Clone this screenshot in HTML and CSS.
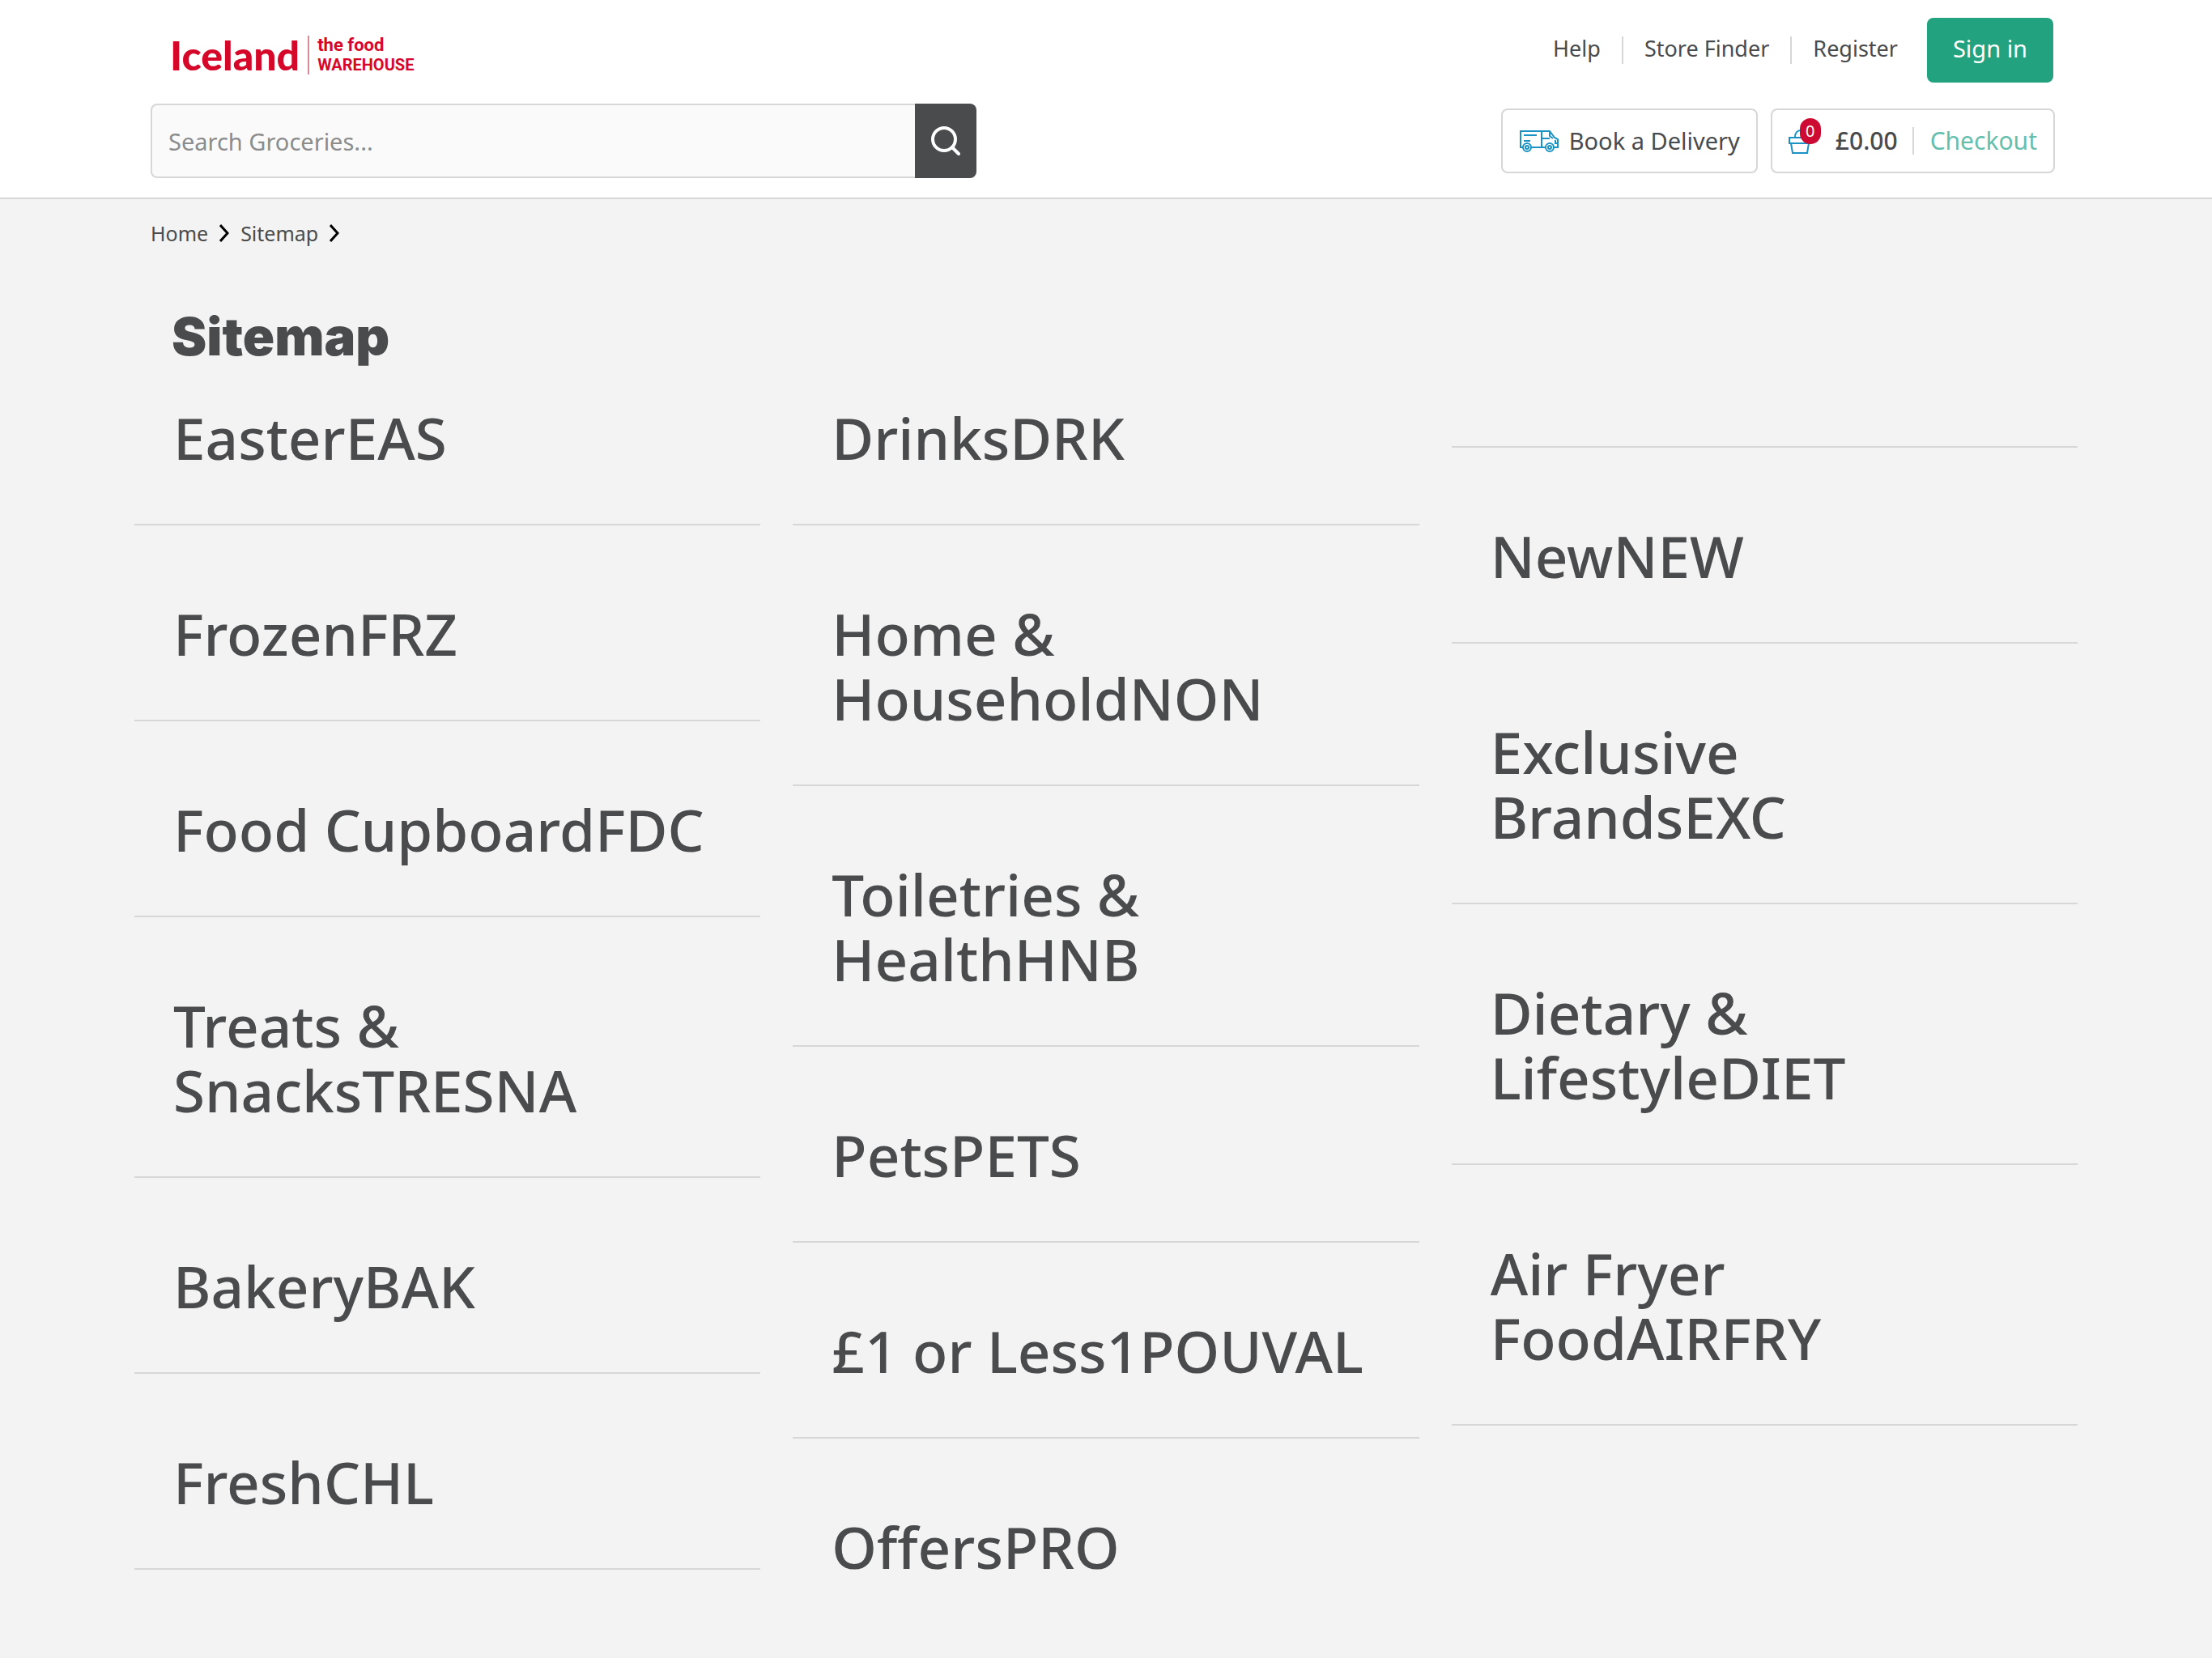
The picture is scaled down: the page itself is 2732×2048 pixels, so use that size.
FILE: index.html
```html
<!DOCTYPE html>
<html lang="en">
<head>
<meta charset="utf-8">
<meta name="viewport" content="width=device-width, initial-scale=1">
<title>Sitemap | Iceland Groceries</title>
<link rel="stylesheet" href="styles.css">
</head>
<body>
<header class="header">
  <div class="container header-inner">
    <div class="header-row header-top">
      <a class="logo" href="#" aria-label="Iceland, the food Warehouse">
        <span class="logo-main">Iceland</span>
        <span class="logo-sub"><span class="logo-food">the food</span><span class="logo-warehouse">WAREHOUSE</span></span>
      </a>
      <nav class="nav">
        <a class="nav-link" href="#">Help</a>
        <a class="nav-link" href="#">Store Finder</a>
        <a class="nav-link" href="#">Register</a>
        <button class="sign-in" type="button">Sign in</button>
      </nav>
    </div>
    <div class="header-row">
      <form class="search" role="search">
        <input class="search-input" type="text" placeholder="Search Groceries..." aria-label="Search Groceries">
        <button class="search-button" type="button" aria-label="Search">
          <svg width="36" height="36" viewBox="0 0 36 36" fill="none" stroke="#fff" stroke-width="4" stroke-linecap="round"><circle cx="16" cy="16" r="14"/><path d="M26 26l8 8"/></svg>
        </button>
      </form>
      <div class="actions">
        <a class="action-box delivery" href="#">
          <svg width="50" height="28" viewBox="0 0 50 28" fill="none" stroke="#1a93c4" stroke-width="2"><path d="M6 22H2V2h36l6 8 4 2v10h-5M14 22h19M28 2v20M28 11h10M38 3v5l4 3M45 13v4h3"/><path d="M6 7h16M6 14h8"/><circle cx="10" cy="22" r="5"/><circle cx="10" cy="22" r="2"/><circle cx="38" cy="22" r="5"/><circle cx="38" cy="22" r="2"/></svg>
          <span>Book a Delivery</span>
        </a>
        <div class="action-box basket">
          <a class="basket-total" href="#">
            <span class="basket-icon">
              <svg width="28" height="32" viewBox="0 0 28 32" fill="none" stroke="#1a93c4" stroke-width="2"><path d="M1 12h26v7H1zM3 19l2 12h18l2-12M8 12c0-6 3-9 7-9s7 3 7 9"/></svg>
              <span class="badge">0</span>
            </span>
            <span>£0.00</span>
          </a>
          <a class="checkout" href="#">Checkout</a>
        </div>
      </div>
    </div>
  </div>
</header>
<main class="container">
  <nav class="breadcrumb" aria-label="Breadcrumb">
    <a href="#">Home</a>
    <svg width="12" height="22" viewBox="0 0 12 22" fill="none" stroke="#000" stroke-width="3"><path d="M1 1l9 10-9 10"/></svg>
    <a href="#">Sitemap</a>
    <svg width="12" height="22" viewBox="0 0 12 22" fill="none" stroke="#000" stroke-width="3"><path d="M1 1l9 10-9 10"/></svg>
  </nav>
  <h1 class="title">Sitemap</h1>
  <div class="columns">
    <ul class="column">
      <li class="item"><a href="#">EasterEAS</a></li>
      <li class="item"><a href="#">FrozenFRZ</a></li>
      <li class="item"><a href="#">Food CupboardFDC</a></li>
      <li class="item"><a href="#">Treats &amp; SnacksTRESNA</a></li>
      <li class="item"><a href="#">BakeryBAK</a></li>
      <li class="item"><a href="#">FreshCHL</a></li>
    </ul>
    <ul class="column">
      <li class="item"><a href="#">DrinksDRK</a></li>
      <li class="item"><a href="#">Home &amp; HouseholdNON</a></li>
      <li class="item"><a href="#">Toiletries &amp; HealthHNB</a></li>
      <li class="item"><a href="#">PetsPETS</a></li>
      <li class="item"><a href="#">£1 or Less1POUVAL</a></li>
      <li class="item item-open"><a href="#">OffersPRO</a></li>
    </ul>
    <ul class="column">
      <li class="item item-end"></li>
      <li class="item"><a href="#">NewNEW</a></li>
      <li class="item"><a href="#">Exclusive BrandsEXC</a></li>
      <li class="item"><a href="#">Dietary &amp; LifestyleDIET</a></li>
      <li class="item"><a href="#">Air Fryer FoodAIRFRY</a></li>
    </ul>
  </div>
</main>
</body>
</html>
```
FILE: styles.css
```css
*, *::before, *::after { box-sizing: border-box; }

body {
  margin: 0;
  background: #f3f3f3;
  color: #4a4b4c;
  font-family: "Noto Sans", sans-serif;
  font-size: 29px;
  line-height: 40px;
}

a { color: inherit; text-decoration: none; }
svg { display: block; flex: none; }
button, input { font: inherit; }

.container {
  max-width: 2400px;
  margin: 0 auto;
}

/* Header */
.header {
  background: #fff;
  border-bottom: 2px solid #d7d7d7;
}
.header-inner { padding: 22px 28px 24px 20px; }
.header-row {
  display: flex;
  justify-content: space-between;
  align-items: center;
}
.header-top {
  margin-bottom: 26px;
  align-items: flex-start;
}

.logo {
  display: flex;
  padding: 22px 0 0 24px;
  color: #d6082a;
}
.logo-main {
  font-family: Lato, sans-serif;
  font-size: 50px;
  line-height: 48px;
  font-weight: 900;
}
.logo-sub {
  display: flex;
  flex-direction: column;
  margin-left: 10px;
  padding-left: 10px;
  border-left: 2px solid #dc8a97;
  font-family: Roboto, sans-serif;
  font-weight: 700;
  line-height: 24px;
}
.logo-food { font-size: 22px; }
.logo-warehouse { font-size: 20px; }

.nav {
  display: flex;
  align-items: center;
  font-size: 27px;
}
.nav-link {
  padding: 0 26px 4px;
  line-height: 30px;
}
.nav-link + .nav-link { border-left: 2px solid #d7d7d7; }
.sign-in {
  width: 156px;
  height: 80px;
  margin: 0 2px 0 10px;
  padding: 0 0 4px;
  border: 0;
  border-radius: 8px;
  background: #22a27f;
  color: #fff;
  font-size: 29px;
}

.search { display: flex; flex: 0 1 1020px; }
.search-input {
  flex: 1;
  min-width: 0;
  height: 92px;
  padding: 0 20px;
  border: 2px solid #d7d7d7;
  border-right: 0;
  border-radius: 8px 0 0 8px;
  background: #fafafa;
  color: #4a4b4c;
}
.search-input::placeholder { color: #8c8c8c; opacity: 1; }
.search-button {
  display: flex;
  align-items: center;
  justify-content: center;
  width: 76px;
  height: 92px;
  padding: 0;
  border: 0;
  border-radius: 0 8px 8px 0;
  background: #4a4b4c;
}

.actions { display: flex; gap: 16px; }
.action-box {
  display: flex;
  align-items: center;
  height: 80px;
  border: 2px solid #d7d7d7;
  border-radius: 8px;
  background: #fff;
}
.delivery { gap: 12px; padding: 0 20px; }
.basket { font-size: 30px; }
.basket-total {
  display: flex;
  align-items: center;
  padding: 0 18px 0 20px;
  font-weight: 500;
}
.basket-icon { position: relative; width: 58px; }
.badge {
  position: absolute;
  left: 14px;
  top: -12px;
  width: 26px;
  height: 32px;
  border-radius: 13px;
  background: #cd0a31;
  color: #fff;
  font-size: 20px;
  line-height: 32px;
  font-weight: 400;
  text-align: center;
}
.checkout {
  padding: 0 20px;
  border-left: 2px solid #d7d7d7;
  color: #66bfae;
  line-height: 34px;
}

/* Breadcrumb and title */
.breadcrumb {
  display: flex;
  align-items: center;
  gap: 14px;
  padding: 22px 20px 0;
  font-size: 25px;
}
.title {
  margin: 68px 0 0;
  padding-left: 46px;
  font-family: Inter, sans-serif;
  font-size: 65px;
  line-height: 80px;
  font-weight: 900;
}

/* Category columns */
.columns {
  display: grid;
  grid-template-columns: repeat(3, minmax(0, 1fr));
  gap: 40px;
  margin-top: 29px;
}
.column {
  margin: 0;
  padding: 0;
  list-style: none;
}
.item {
  margin-bottom: 78px;
  padding: 16px 48px 66px;
  border-bottom: 2px solid #d7d7d7;
  font-size: 71px;
  line-height: 80px;
  font-weight: 500;
}
.item a { display: block; }
.item-open { margin-bottom: 0; border-bottom: 0; }
.item-end { padding: 66px 0 0; }
```
